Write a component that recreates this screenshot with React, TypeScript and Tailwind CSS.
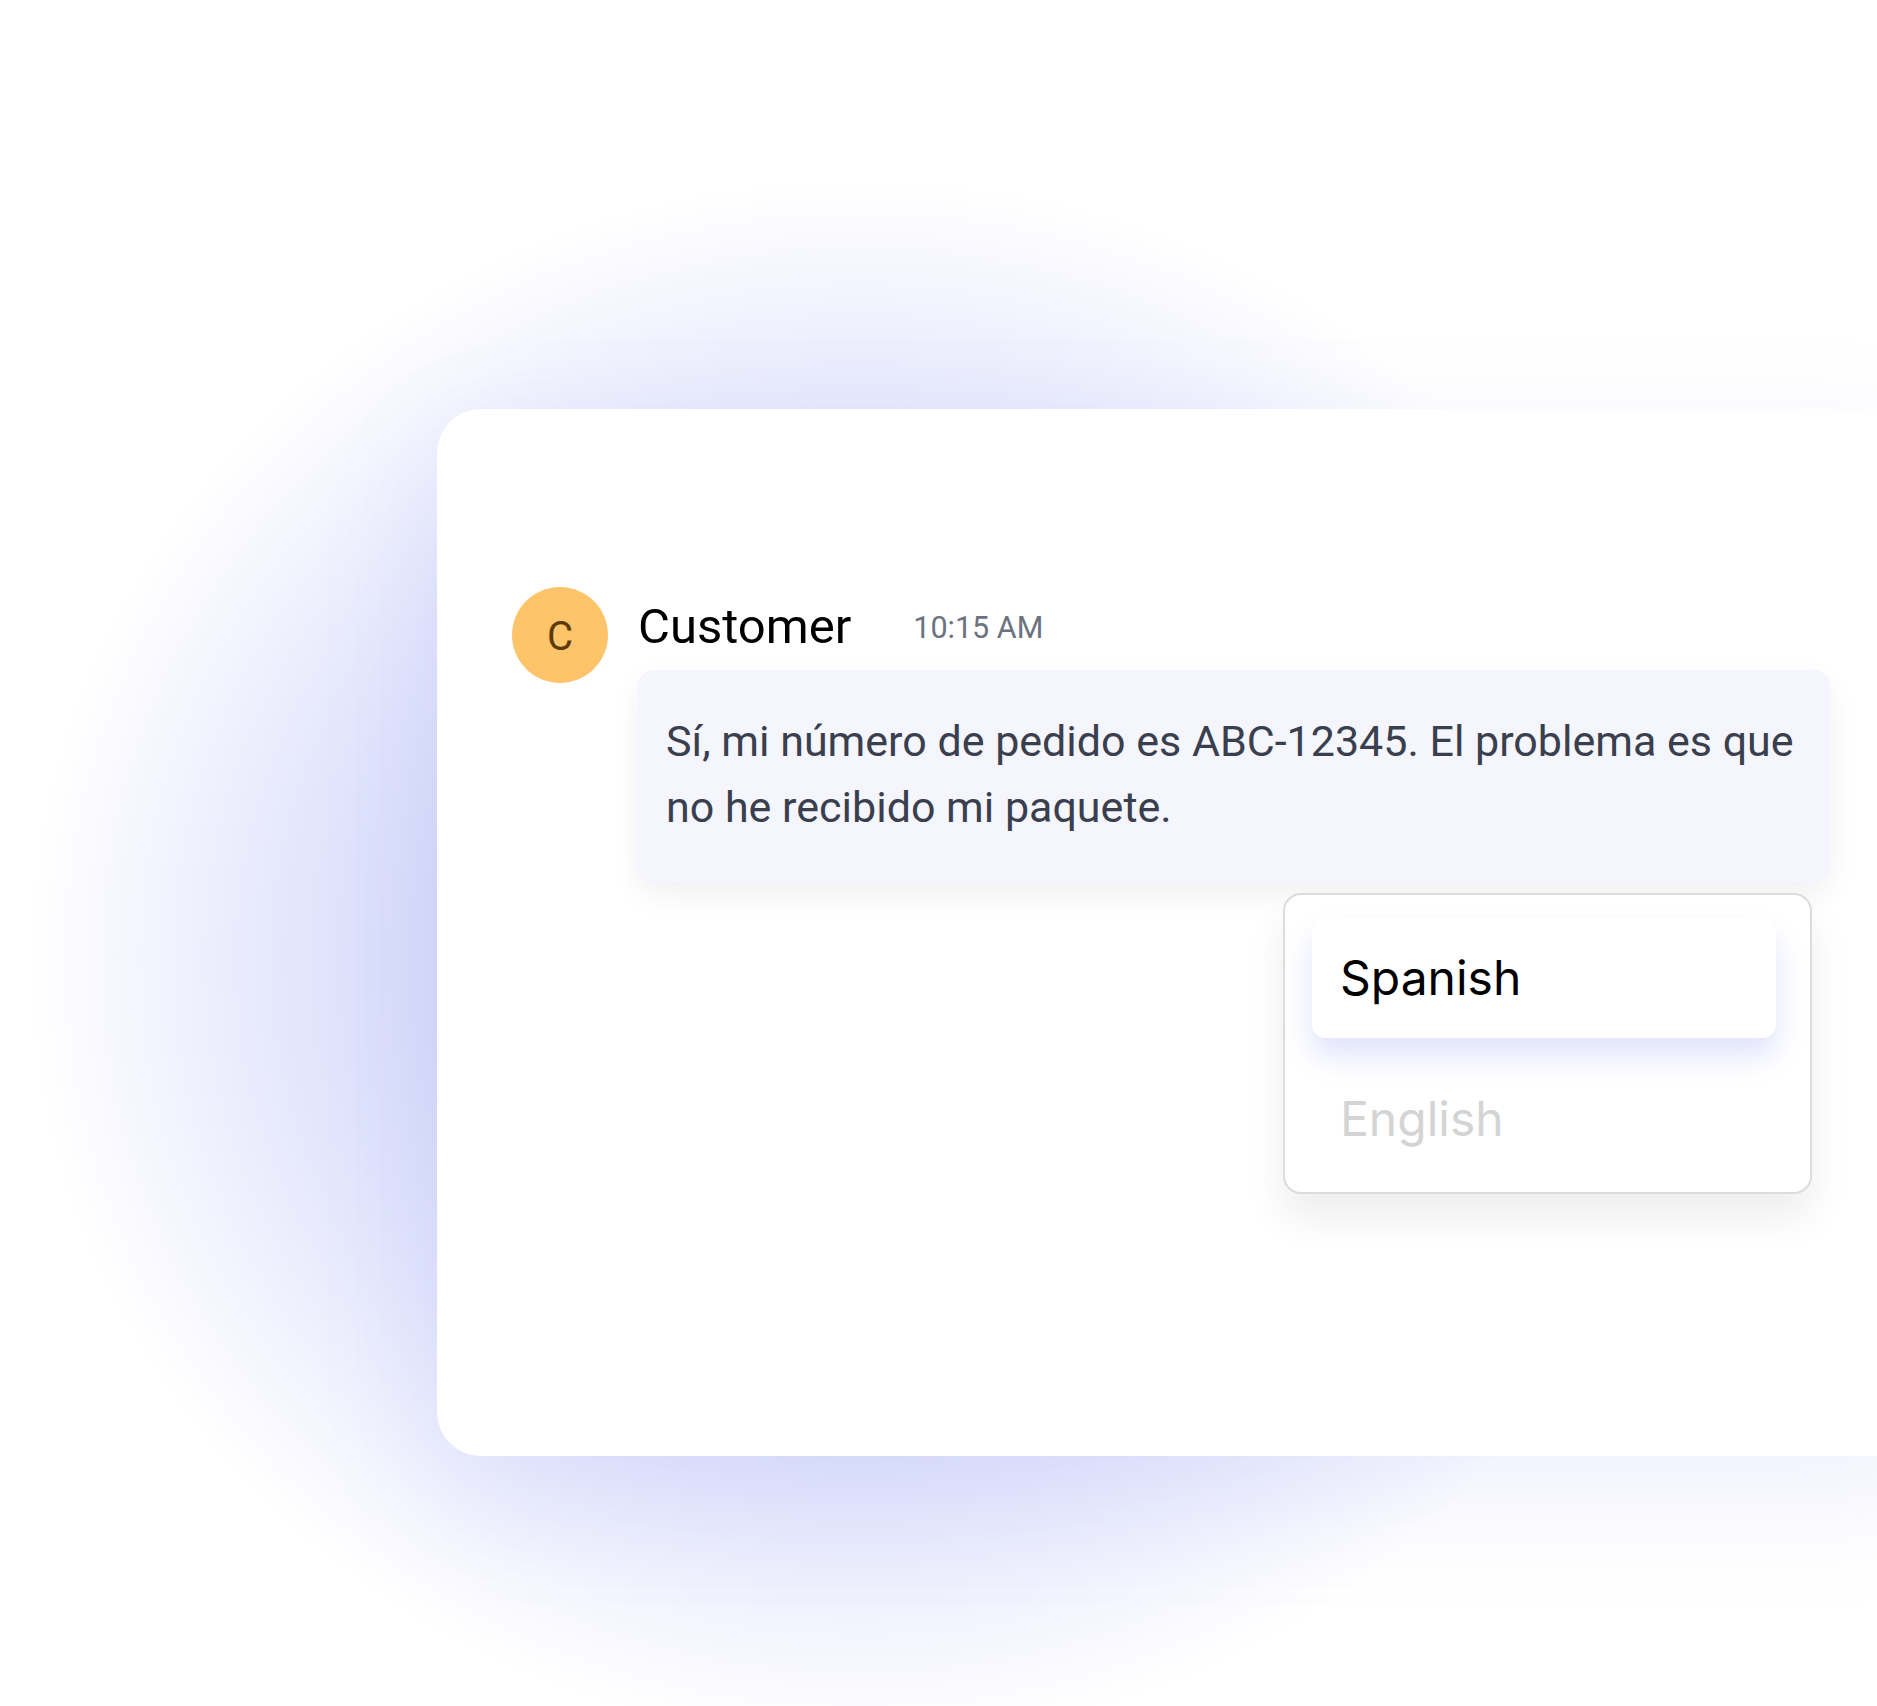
import React from "react";

export default function App() {
  return (
    <div className="relative w-[1877px] h-[1706px] overflow-hidden bg-white font-['Roboto',sans-serif]">
      <div className="absolute inset-0 bg-[radial-gradient(ellipse_830px_780px_at_860px_960px,#c8cef8_0%,#d5d9f9_50%,#e3e6fc_68%,#f5f6fe_88%,#ffffff_100%)]" />
      <div className="relative pt-[409px] pl-[437px]">
        <div className="w-[1500px] h-[1047px] rounded-[44px] bg-white shadow-[0_40px_120px_rgba(140,150,240,0.14)] pt-[178px] pl-[75px]">
          <div className="flex">
            <div className="w-[96px] h-[96px] rounded-full bg-[#fdc46a] flex items-center justify-center shrink-0">
              <span className="text-[40px] leading-none text-[#5a3a07] mt-[3px]">C</span>
            </div>
            <div className="ml-[30px] flex flex-col w-[1192px]">
              <div className="flex items-start h-[83px]">
                <span className="text-[49px] leading-none text-black mt-[15px]">Customer</span>
                <span className="text-[30.5px] leading-none text-[#6b7280] mt-[26px] ml-[62px]">10:15 AM</span>
              </div>
              <div className="rounded-[16px] bg-[#f4f5fd] shadow-[0_12px_30px_rgba(0,0,0,0.06)] pl-[28px] pr-[20px] pt-[38px] pb-[42px]">
                <p className="text-[43px] leading-[66px] text-[#3a3f4d] whitespace-nowrap">
                  Sí, mi número de pedido es ABC-12345. El problema es que
                  <br />
                  no he recibido mi paquete.
                </p>
              </div>
              <div className="self-end mr-[18px] mt-[11px] w-[529px] rounded-[18px] border-2 border-[#dcdcdc] bg-white shadow-[0_24px_40px_rgba(0,0,0,0.07)] pt-[23px] pl-[27px] pr-[34px] pb-[49px] font-['Inter',sans-serif]">
                <div className="h-[120px] rounded-[14px] bg-white shadow-[0_18px_28px_rgba(120,130,240,0.22)] flex items-center pl-[28px]">
                  <span className="text-[48px] leading-none text-black">Spanish</span>
                </div>
                <div className="mt-[57px] pl-[28px]">
                  <span className="block text-[48px] leading-none text-[#d4d4d4]">English</span>
                </div>
              </div>
            </div>
          </div>
        </div>
      </div>
    </div>
  );
}
